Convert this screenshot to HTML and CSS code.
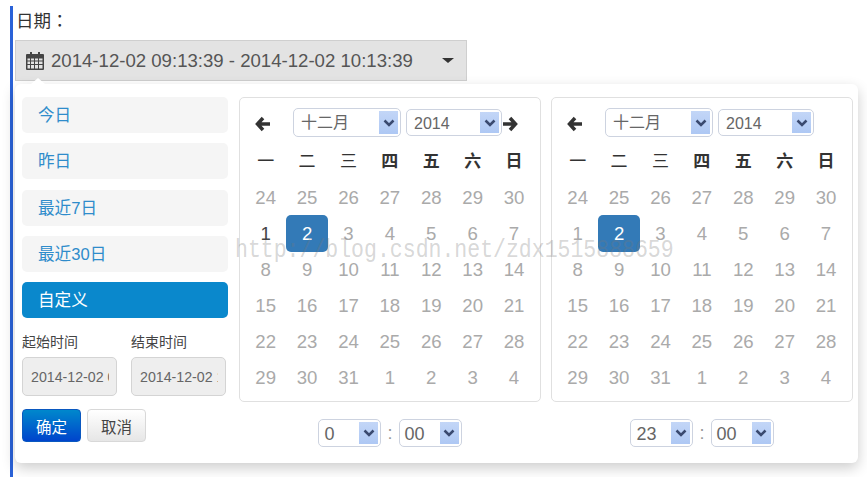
FILE: index.html
```html
<!DOCTYPE html>
<html lang="zh-CN">
<head>
  <meta charset="UTF-8" />
  <title>日期</title>
  <link rel="stylesheet" href="styles.css">
</head>
<body>
  <div class="page">
    <div class="field-label" lang="zh-TW">日期：</div>

    <div class="range-btn">
      <svg class="cal-icon" viewBox="0 0 18 18" aria-hidden="true">
        <path fill="#444" fill-rule="evenodd" d="M4 0h2v2h6V0h2v2h3a1 1 0 0 1 1 1v14a1 1 0 0 1-1 1H1a1 1 0 0 1-1-1V3a1 1 0 0 1 1-1h3zM1.500 6.500v2h2.500v-2zm3.500 0v2h3v-2zm4 0v2h3v-2zm4 0v2h3.500v-2zM1.500 9.500v2.500h2.500V9.500zm3.500 0v2.500h3V9.500zm4 0v2.500h3V9.500zm4 0v2.500h3.500V9.500zM1.500 13v3.500h2.500V13zm3.500 0v3.500h3V13zm4 0v3.500h3V13zm4 0v3.500h3.500V13z"/>
      </svg>
      <span class="range-text">2014-12-02 09:13:39 - 2014-12-02 10:13:39</span>
      <span class="caret"></span>
    </div>

    <div class="dropdown">
      <span class="notch"></span>

      <div class="side">
        <ul class="ranges">
          <li>今日</li>
          <li>昨日</li>
          <li>最近7日</li>
          <li>最近30日</li>
          <li class="active">自定义</li>
        </ul>
        <div class="inputs">
          <label class="input-col">起始时间<input type="text" readonly value="2014-12-02 09:13:39"></label>
          <label class="input-col">结束时间<input type="text" readonly value="2014-12-02 10:13:39"></label>
        </div>
        <div class="actions">
          <button class="btn btn-ok" type="button">确定</button>
          <button class="btn btn-cancel" type="button">取消</button>
        </div>
      </div>

      <div class="cal-col">
        <div class="panel">
          <div class="cal-head">
            <svg class="arrow arrow-prev" viewBox="0 0 16 16"><path d="M8 2 2.500 8 8 14M3 8h12"/></svg>
            <span class="sel sel-month">十二月<i class="sel-btn"><svg viewBox="0 0 12 8"><path d="M1.500 1.500 6 6l4.500-4.500"/></svg></i></span>
            <span class="sel sel-year">2014<i class="sel-btn"><svg viewBox="0 0 12 8"><path d="M1.500 1.500 6 6l4.500-4.500"/></svg></i></span>
            <svg class="arrow arrow-next" viewBox="0 0 16 16"><path d="M8 2 13.500 8 8 14M13 8H1"/></svg>
          </div>
          <div class="days">
            <b class="thin">一</b><b class="thin">二</b><b class="thin">三</b><b>四</b><b>五</b><b>六</b><b>日</b>
            <span>24</span><span>25</span><span>26</span><span>27</span><span>28</span><span>29</span><span>30</span>
            <span class="dark">1</span><span class="on">2</span><span>3</span><span>4</span><span>5</span><span>6</span><span>7</span>
            <span>8</span><span>9</span><span>10</span><span>11</span><span>12</span><span>13</span><span>14</span>
            <span>15</span><span>16</span><span>17</span><span>18</span><span>19</span><span>20</span><span>21</span>
            <span>22</span><span>23</span><span>24</span><span>25</span><span>26</span><span>27</span><span>28</span>
            <span>29</span><span>30</span><span>31</span><span>1</span><span>2</span><span>3</span><span>4</span>
          </div>
        </div>
        <div class="time">
          <span class="sel sel-time">0<i class="sel-btn"><svg viewBox="0 0 12 8"><path d="M1.500 1.500 6 6l4.500-4.500"/></svg></i></span>
          <span class="colon">:</span>
          <span class="sel sel-time">00<i class="sel-btn"><svg viewBox="0 0 12 8"><path d="M1.500 1.500 6 6l4.500-4.500"/></svg></i></span>
        </div>
      </div>

      <div class="cal-col">
        <div class="panel">
          <div class="cal-head">
            <svg class="arrow arrow-prev" viewBox="0 0 16 16"><path d="M8 2 2.500 8 8 14M3 8h12"/></svg>
            <span class="sel sel-month">十二月<i class="sel-btn"><svg viewBox="0 0 12 8"><path d="M1.500 1.500 6 6l4.500-4.500"/></svg></i></span>
            <span class="sel sel-year">2014<i class="sel-btn"><svg viewBox="0 0 12 8"><path d="M1.500 1.500 6 6l4.500-4.500"/></svg></i></span>
          </div>
          <div class="days">
            <b class="thin">一</b><b class="thin">二</b><b class="thin">三</b><b>四</b><b>五</b><b>六</b><b>日</b>
            <span>24</span><span>25</span><span>26</span><span>27</span><span>28</span><span>29</span><span>30</span>
            <span>1</span><span class="on">2</span><span>3</span><span>4</span><span>5</span><span>6</span><span>7</span>
            <span>8</span><span>9</span><span>10</span><span>11</span><span>12</span><span>13</span><span>14</span>
            <span>15</span><span>16</span><span>17</span><span>18</span><span>19</span><span>20</span><span>21</span>
            <span>22</span><span>23</span><span>24</span><span>25</span><span>26</span><span>27</span><span>28</span>
            <span>29</span><span>30</span><span>31</span><span>1</span><span>2</span><span>3</span><span>4</span>
          </div>
        </div>
        <div class="time">
          <span class="sel sel-time">23<i class="sel-btn"><svg viewBox="0 0 12 8"><path d="M1.500 1.500 6 6l4.500-4.500"/></svg></i></span>
          <span class="colon">:</span>
          <span class="sel sel-time">00<i class="sel-btn"><svg viewBox="0 0 12 8"><path d="M1.500 1.500 6 6l4.500-4.500"/></svg></i></span>
        </div>
      </div>

      <div class="watermark">http://blog.csdn.net/zdx1515888659</div>
    </div>
  </div>
</body>
</html>
```

FILE: styles.css
```css
* {
  box-sizing: border-box;
}

html, body {
  height: 100%;
}

body {
  margin: 0;
  background: #fff;
  overflow: hidden;
  font-family: "Liberation Sans", "Noto Sans CJK SC", sans-serif;
  color: #333;
}

.page {
  margin: 6px 0 0 10px;
  height: 471px;
  padding-left: 2px;
  border-left: 3px solid #2a62d8;
}

.field-label {
  height: 34px;
  padding: 1px 0 0 1px;
  font-family: "Noto Sans CJK TC", sans-serif;
  font-size: 17.500px;
  line-height: 26px;
}

/* ----- date range button ----- */
.range-btn {
  display: flex;
  align-items: center;
  width: 452px;
  height: 41px;
  padding-left: 10px;
  background: #e3e3e3;
  border: 1px solid #cfcfcf;
  color: #555;
}

.cal-icon {
  width: 18px;
  height: 18px;
  flex: none;
}

.range-text {
  margin-left: 7px;
  font-size: 18.600px;
  white-space: nowrap;
}

.caret {
  margin-left: 29px;
  border-top: 5px solid #333;
  border-left: 6px solid transparent;
  border-right: 6px solid transparent;
}

/* ----- dropdown ----- */
.dropdown {
  position: relative;
  display: flex;
  width: 843px;
  height: 379px;
  margin-top: 3px;
  padding: 13px 5px 0 7px;
  background: #fff;
  border-radius: 6px;
  box-shadow: 0 5px 14px rgba(0, 0, 0, .2);
}

.notch {
  position: absolute;
  top: -6px;
  left: 16px;
  border-bottom: 6px solid #fff;
  border-left: 7px solid transparent;
  border-right: 7px solid transparent;
}

.side {
  width: 206px;
  flex: none;
  margin-right: 11px;
}

.ranges {
  display: flex;
  flex-direction: column;
  gap: 10.250px;
  margin: 0;
  padding: 0;
  list-style: none;
}

.ranges li {
  height: 36px;
  padding-left: 16px;
  background: #f5f5f5;
  border-radius: 5px;
  color: #2f8ccb;
  font-size: 16.600px;
  line-height: 37px;
}

.ranges li.active {
  background: #0a88cc;
  color: #fff;
}

.inputs {
  display: flex;
  gap: 14px;
  margin-top: 14px;
}

.input-col {
  display: flex;
  flex-direction: column;
  gap: 5px;
  font-size: 14px;
  line-height: 20px;
  color: #444;
}

.input-col input {
  width: 95px;
  height: 39px;
  padding: 0 7px 0 8px;
  background: #eee;
  border: 1px solid #d4d4d4;
  border-radius: 5px;
  font: 14.200px "Liberation Sans", sans-serif;
  color: #666;
}

.actions {
  display: flex;
  gap: 6px;
  margin-top: 13px;
}

.btn {
  width: 59px;
  height: 33px;
  padding: 0;
  border-radius: 4px;
  font-size: 15.500px;
  font-family: inherit;
}

.btn-ok {
  background: linear-gradient(#0088cc, #0044cc);
  border: 1px solid #0a58c0;
  color: #fff;
}

.btn-cancel {
  background: linear-gradient(#fff, #e6e6e6);
  border: 1px solid #d8d8d8;
  color: #444;
}

/* ----- calendars ----- */
.cal-col {
  width: 302px;
  flex: none;
  margin-right: 10px;
}

.cal-col:last-of-type {
  margin-right: 0;
}

.panel {
  height: 305px;
  padding: 10px 5px 0;
  border: 1px solid #e0e0e0;
  border-radius: 5px;
}

.cal-head {
  display: flex;
  align-items: center;
  height: 29px;
  margin-bottom: 6px;
}

.arrow {
  width: 16px;
  height: 16px;
  flex: none;
}

.arrow path {
  fill: none;
  stroke: #333;
  stroke-width: 3.500;
}

.arrow-prev {
  margin: 3px 22px 0 10px;
}

.arrow-next {
  margin-top: 3px;
}

.sel {
  position: relative;
  display: block;
  flex: none;
  background: #fff;
  border: 1px solid #cdd3e0;
  border-radius: 5px;
  color: #666;
  font-size: 16px;
}

.sel-month {
  width: 108px;
  height: 29px;
  margin-right: 5px;
  padding-left: 7px;
  line-height: 28px;
}

.sel-year {
  width: 96px;
  height: 27px;
  padding-left: 7px;
  line-height: 27px;
}

.sel-time {
  width: 63px;
  height: 28px;
  padding-left: 5px;
  font-size: 18px;
  line-height: 29px;
}

.sel-btn {
  position: absolute;
  top: 2px;
  right: 2px;
  bottom: 2px;
  display: flex;
  align-items: center;
  justify-content: center;
  width: 19px;
  background: linear-gradient(#c3d6f7, #aec8f4);
}

.sel-btn svg {
  width: 12px;
  height: 8px;
}

.sel-btn path {
  fill: none;
  stroke: #3a4a70;
  stroke-width: 2.500;
}

.days {
  display: grid;
  grid-template-columns: repeat(7, 41.400px);
  grid-auto-rows: 36px;
  width: 290px;
  text-align: center;
  font-size: 18.600px;
  line-height: 38px;
  color: #aaa;
}

.days b {
  font-size: 17px;
  color: #333;
}

.days b.thin {
  font-weight: normal;
}

.days .dark {
  color: #444;
}

.days .on {
  height: 37px;
  background: #337ab7;
  border-radius: 5px;
  color: #fff;
}

.time {
  display: flex;
  justify-content: center;
  align-items: center;
  gap: 6px;
  margin-top: 17px;
}

.colon {
  color: #999;
  font-size: 18px;
}

/* csdn watermark, sits on top of the calendars */
.watermark {
  position: absolute;
  top: 152px;
  left: 220px;
  font-family: "Liberation Mono", monospace;
  font-size: 21.500px;
  line-height: 28px;
  white-space: nowrap;
  color: rgba(120, 120, 120, .3);
  transform: scaleY(1.2);
}
```
